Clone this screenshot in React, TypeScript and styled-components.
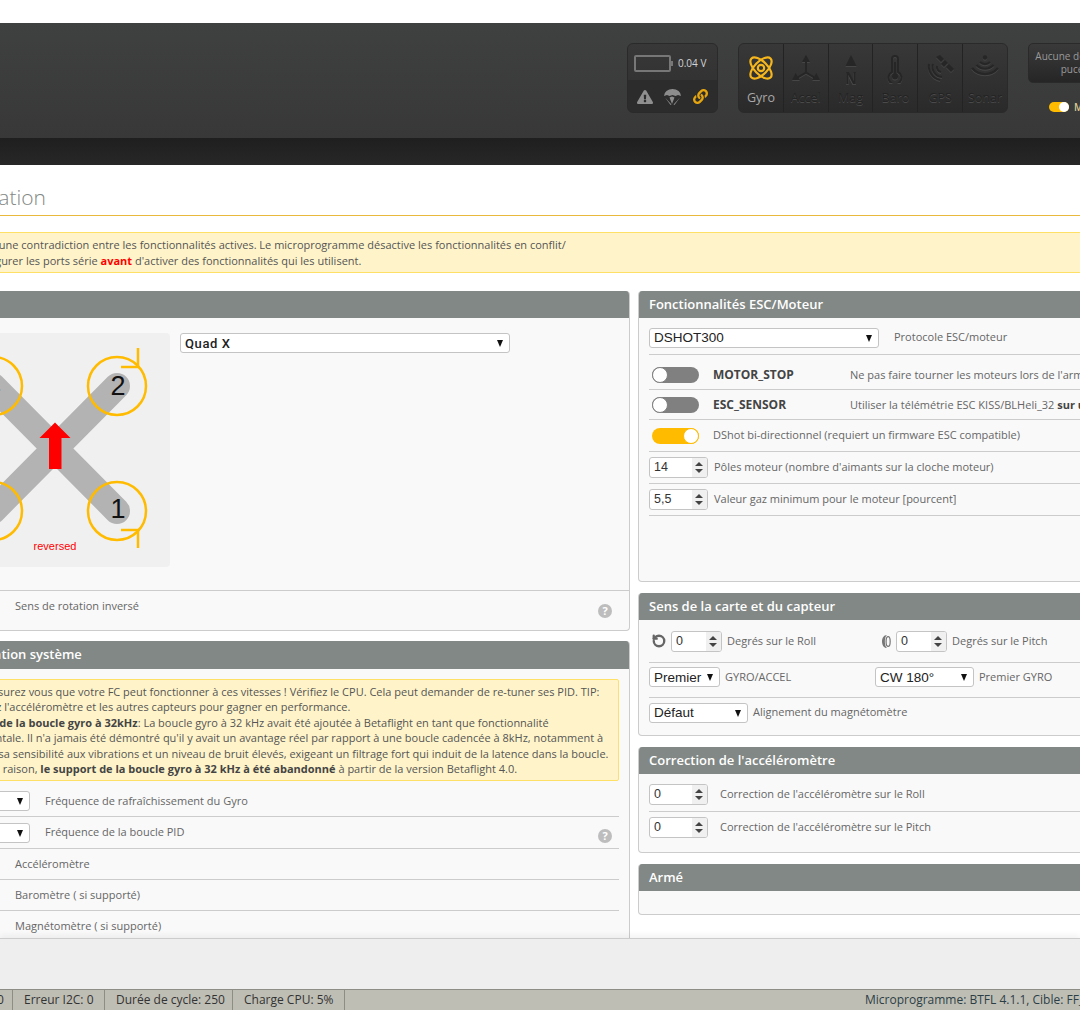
import styled, { createGlobalStyle } from "styled-components";
import { FaExclamationTriangle, FaLink } from "react-icons/fa";
import { RotateCcw } from "lucide-react";

const Global = createGlobalStyle`
  html, body {
    margin: 0;
    background: #fff;
    overflow: hidden;
  }
  body {
    font-family: "Open Sans", "Liberation Sans", sans-serif;
    font-size: 11px;
    color: #555;
  }
`;

const Shell = styled.div`
  width: 1080px;
  height: 1010px;
  overflow: hidden;
  display: flex;
  flex-direction: column;
  background: #fff;
`;

const TopGap = styled.div`
  height: 23px;
  flex: none;
`;

const Header = styled.header`
  height: 115px;
  flex: none;
  box-sizing: border-box;
  padding: 20px 0 0 627px;
  display: flex;
  align-items: flex-start;
  gap: 20px;
  overflow: hidden;
  background: linear-gradient(to bottom, #3f4040 0%, #383838 100%);
`;

const SubHeader = styled.div`
  height: 27px;
  flex: none;
  background: linear-gradient(to bottom, #1f1f1f, #272727);
`;

const Battery = styled.div`
  width: 91px;
  height: 70px;
  flex: none;
  box-sizing: border-box;
  border: 1px solid #2a2a2a;
  border-radius: 6px;
  overflow: hidden;
  background: linear-gradient(to bottom, #383838, #2e2e2e);
`;

const BatteryTop = styled.div`
  height: 36px;
  display: flex;
  align-items: center;
  padding: 2px 0 0 6px;
  box-sizing: border-box;
  gap: 7px;
  font-size: 10px;
  color: #d4d4d4;
`;

const BatteryCell = styled.div`
  width: 37px;
  height: 17px;
  box-sizing: border-box;
  border: 2px solid #777;
  border-radius: 2px;
  position: relative;

  &::after {
    content: "";
    position: absolute;
    right: -4px;
    top: 4px;
    width: 2px;
    height: 5px;
    background: #777;
  }
`;

const BatteryIcons = styled.div`
  height: 33px;
  display: flex;
  align-items: center;
  justify-content: space-around;
  padding: 0 3px 2px;
  background: #2c2c2c;
  color: #8f8f8f;
`;

const Sensors = styled.div`
  flex: none;
  width: 270px;
  display: flex;
  height: 70px;
  box-sizing: border-box;
  border: 1px solid #2a2a2a;
  border-radius: 6px;
  overflow: hidden;
  background: linear-gradient(to bottom, #383838, #2a2a2a);
`;

const Sensor = styled.div<{ $on?: boolean }>`
  flex: 1;
  min-width: 0;
  box-sizing: border-box;
  display: flex;
  flex-direction: column;
  align-items: center;
  justify-content: space-between;
  padding: 11px 0 6px;
  border-left: 1px solid #232323;
  font-size: 12.5px;
  line-height: 16px;
  color: ${({ $on }) => ($on ? "#a8a8a8" : "#232323")};
  text-shadow: ${({ $on }) => ($on ? "none" : "0 1px 0 #4a4a4a")};

  &:first-child {
    border-left: 0;
  }

  svg {
    display: block;
    filter: ${({ $on }) => ($on ? "none" : "drop-shadow(0 1px 0 #464646)")};
  }
`;

const RightTools = styled.div`
  flex: none;
  display: flex;
  flex-direction: column;
  gap: 17px;
`;

const ChipBox = styled.div`
  width: 88px;
  height: 40px;
  box-sizing: border-box;
  border: 1px solid #2a2a2a;
  border-radius: 5px;
  padding: 6px 2px 0;
  text-align: center;
  font-size: 10px;
  line-height: 13px;
  color: #9a9a9a;
  background: linear-gradient(to bottom, #3a3a3a, #262626);
`;

const ExpertRow = styled.div`
  display: flex;
  align-items: center;
  gap: 5px;
  padding-left: 21px;
  font-size: 10px;
  font-weight: 600;
  color: #d8c890;
`;

const MiniToggle = styled.span`
  width: 20px;
  height: 10px;
  border-radius: 5px;
  background: #ffbb00;
  position: relative;

  &::after {
    content: "";
    position: absolute;
    right: 0;
    top: 0;
    width: 10px;
    height: 10px;
    border-radius: 50%;
    background: #fff;
  }
`;

const Main = styled.main`
  flex: 1;
  min-height: 0;
  overflow: hidden;
  background: #fff;
`;

const Content = styled.div`
  width: 1409px;
  margin-left: -71px;
`;

const Title = styled.h1`
  margin: 0;
  height: 51px;
  box-sizing: border-box;
  padding-top: 17px;
  font-size: 21px;
  line-height: 30px;
  font-weight: 300;
  color: #828885;
  border-bottom: 1px solid #e8b93c;
  text-indent: -11px;
`;

const TopNote = styled.div`
  margin-top: 16px;
  height: 41px;
  box-sizing: border-box;
  padding: 4px 0 0 9px;
  background: #fff4c9;
  border-top: 1px solid #ffe066;
  border-bottom: 1px solid #ffe066;
  line-height: 15.6px;
  color: #555;
  white-space: nowrap;
`;

const Red = styled.strong`
  color: #f00;
`;

const Columns = styled.div`
  display: grid;
  grid-template-columns: 701px 700px;
  gap: 8px;
  margin-top: 18px;
`;

const Column = styled.div`
  display: flex;
  flex-direction: column;
  gap: 10px;
`;

const RightColumn = styled(Column)`
  gap: 11px;
`;

const Panel = styled.section`
  box-sizing: border-box;
  border: 1px solid #ccc;
  border-top: 0;
  border-radius: 4px;
  background: #f9f9f9;
  overflow: hidden;
`;

const PanelHead = styled.h2<{ $h?: number }>`
  margin: 0 -1px;
  height: ${({ $h }) => $h ?? 27}px;
  padding-left: 11px;
  font-size: 13px;
  line-height: 26px;
  font-weight: 600;
  color: #fff;
  background: #828885;
`;

const PanelBody = styled.div<{ $h?: number }>`
  ${({ $h }) => ($h ? `height: ${$h}px;` : "")}
`;

const MixerRow = styled.div`
  display: flex;
  align-items: flex-start;
  gap: 10px;
  height: 273px;
  box-sizing: border-box;
  padding: 15px 0 0 10px;
  border-bottom: 1px solid #ccc;
`;

const MixerTile = styled.div`
  width: 230px;
  height: 234px;
  border-radius: 4px;
  background: #f0f0f0;
  flex: none;
`;

const Row = styled.div<{
  $h: number;
  $pt?: number;
  $pb?: number;
  $flat?: boolean;
  $gap?: number;
}>`
  display: flex;
  align-items: center;
  box-sizing: border-box;
  height: ${({ $h }) => $h}px;
  padding-top: ${({ $pt }) => $pt ?? 0}px;
  padding-bottom: ${({ $pb }) => $pb ?? 0}px;
  margin: 0 10px;
  gap: ${({ $gap }) => $gap ?? 5}px;
  border-bottom: ${({ $flat }) => ($flat ? "0" : "1px solid #ccc")};
  white-space: nowrap;
  color: #666;
`;

const WideRow = styled(Row)`
  margin: 0;
  padding-left: 11px;
  padding-right: 17px;
`;

const Half = styled.div<{ $w: number }>`
  flex: none;
  width: ${({ $w }) => $w}px;
  display: flex;
  align-items: center;
  gap: 5px;
`;

const Label = styled.span<{ $ml?: number }>`
  margin-left: ${({ $ml }) => $ml ?? 0}px;
  margin-bottom: 2px;
  color: #666;
`;

const Name = styled.strong`
  width: 137px;
  flex: none;
  font-size: 12px;
  font-weight: 700;
  color: #444;
  margin: 0 0 2px 14px;
`;

const Help = styled.span<{ $mt?: number; $mr?: number }>`
  width: 14px;
  height: 14px;
  flex: none;
  margin-left: auto;
  margin-top: ${({ $mt }) => $mt ?? 0}px;
  margin-right: ${({ $mr }) => $mr ?? 0}px;
  border-radius: 50%;
  background: #bdbdbd;
  color: #fff;
  font-size: 11px;
  font-weight: 700;
  line-height: 14px;
  text-align: center;
`;

const Toggle = styled.span<{ $on?: boolean }>`
  width: 47px;
  height: 16px;
  flex: none;
  border-radius: 8px;
  background: ${({ $on }) => ($on ? "#ffbb00" : "#808080")};
  position: relative;
  margin-left: 3px;

  &::after {
    content: "";
    position: absolute;
    top: 0;
    ${({ $on }) => ($on ? "right: 0;" : "left: 0;")}
    width: 16px;
    height: 16px;
    box-sizing: border-box;
    border-radius: 50%;
    background: #fff;
    border: 1px solid ${({ $on }) => ($on ? "#ffbb00" : "#808080")};
  }
`;

const SelectWrap = styled.span<{ $w: number }>`
  width: ${({ $w }) => $w}px;
  height: 20px;
  flex: none;
  position: relative;
  display: block;

  &::after {
    content: "";
    position: absolute;
    right: 7px;
    top: 7px;
    border-left: 3.5px solid transparent;
    border-right: 3.5px solid transparent;
    border-top: 7px solid #111;
    pointer-events: none;
  }
`;

const NativeSelect = styled.select<{ $quad?: boolean }>`
  appearance: none;
  display: block;
  width: 100%;
  height: 100%;
  box-sizing: border-box;
  margin: 0;
  padding: 0 0 0 4px;
  border: 1px solid #c4c4c4;
  border-radius: 3px;
  background: #fff;
  color: #222;
  font-family: ${({ $quad }) => ($quad ? "Roboto" : '"Liberation Sans"')}, sans-serif;
  font-size: ${({ $quad }) => ($quad ? "13px" : "13.5px")};
  font-weight: ${({ $quad }) => ($quad ? 500 : 400)};
  letter-spacing: ${({ $quad }) => ($quad ? "0.6px" : "0")};
`;

const NumberBox = styled.span<{ $w: number }>`
  width: ${({ $w }) => $w}px;
  height: 21px;
  flex: none;
  box-sizing: border-box;
  display: flex;
  border: 1px solid #c4c4c4;
  border-radius: 3px;
  background: #fff;
  overflow: hidden;
`;

const NumberValue = styled.span`
  flex: 1;
  padding-left: 4px;
  font-family: "Liberation Sans", sans-serif;
  font-size: 12.5px;
  line-height: 19px;
  color: #333;
`;

const Stepper = styled.span`
  width: 15px;
  background: #f0f0f0;
  position: relative;

  &::before,
  &::after {
    content: "";
    position: absolute;
    left: 3px;
    border-left: 4px solid transparent;
    border-right: 4px solid transparent;
  }

  &::before {
    top: 4px;
    border-bottom: 4px solid #444;
  }

  &::after {
    bottom: 4px;
    border-top: 4px solid #444;
  }
`;

const YellowNote = styled.div`
  margin: 10px 10px 0;
  height: 102px;
  box-sizing: border-box;
  padding: 4px 0 0 6px;
  background: #fff4c9;
  border: 1px solid #ffe066;
  border-radius: 2px;
  line-height: 15.4px;
  white-space: nowrap;
  color: #555;
`;

const Dark = styled.strong`
  color: #444;
`;

const RollIcon = styled(RotateCcw)`
  flex: none;
  margin-left: 3px;
`;

const Footer = styled.div`
  height: 51px;
  flex: none;
  background: #eee;
  border-top: 1px solid #ccc;
  box-shadow: 0 -3px 6px rgba(0, 0, 0, 0.05);
  box-sizing: border-box;
`;

const StatusBar = styled.footer`
  height: 21px;
  flex: none;
  display: flex;
  align-items: stretch;
  box-sizing: border-box;
  background: #bfbeb5;
  border-top: 1px solid #8d8c85;
  font-size: 12px;
  line-height: 20px;
  color: #333;
  white-space: nowrap;
`;

const StatusItem = styled.span<{ $w: number }>`
  width: ${({ $w }) => $w}px;
  flex: none;
  box-sizing: border-box;
  padding-left: 11px;
  border-right: 1px solid #8d8c85;
`;

const ClippedStat = styled(StatusItem)`
  padding-left: 0;
  text-indent: -3px;
`;

const FirmwareInfo = styled.span`
  flex: none;
  margin-left: 520px;
  color: #2c3e46;
`;

function Select({ value, w, quad }: { value: string; w: number; quad?: boolean }) {
  return (
    <SelectWrap $w={w}>
      <NativeSelect $quad={quad} defaultValue={value}>
        <option>{value}</option>
      </NativeSelect>
    </SelectWrap>
  );
}

function Num({ value, w = 59 }: { value: string; w?: number }) {
  return (
    <NumberBox $w={w}>
      <NumberValue>{value}</NumberValue>
      <Stepper />
    </NumberBox>
  );
}

function Mixer() {
  const orange = "#ffbb00";
  return (
    <svg width="230" height="234" viewBox="0 0 230 234">
      <g stroke="#b3b3b3" strokeWidth="26" strokeLinecap="round">
        <line x1="53" y1="53" x2="177" y2="178" />
        <line x1="177" y1="53" x2="53" y2="178" />
      </g>
      <g fill="none" stroke={orange} strokeWidth="2.5">
        <circle cx="53" cy="53" r="29" />
        <circle cx="177" cy="53" r="29" />
        <circle cx="53" cy="178" r="29" />
        <circle cx="177" cy="178" r="29" />
        <path d="M198 15 V34 H181" />
        <path d="M198 215 V197 H181" />
        <path d="M32 15 V34 H49" />
        <path d="M32 215 V197 H49" />
      </g>
      <path d="M115 89.500 L130.500 105 H121.500 V136 H109 V105 H99.500 Z" fill="#f00" />
      <g fontFamily="Liberation Sans, sans-serif" fontSize="27" fill="#111" textAnchor="middle">
        <text x="178" y="62">2</text>
        <text x="178" y="185">1</text>
        <text x="53" y="62">4</text>
        <text x="53" y="185">3</text>
      </g>
      <text
        x="115"
        y="217"
        fontFamily="Liberation Sans, sans-serif"
        fontSize="11"
        fill="#f00"
        textAnchor="middle"
      >
        reversed
      </text>
    </svg>
  );
}

function GyroIcon() {
  return (
    <svg width="26" height="26" viewBox="0 0 26 26" fill="none" stroke="#f5b51c" strokeWidth="2.2">
      <ellipse cx="13" cy="13" rx="13.500" ry="6.500" transform="rotate(45 13 13)" />
      <ellipse cx="13" cy="13" rx="13.500" ry="6.500" transform="rotate(-45 13 13)" />
      <circle cx="13" cy="13" r="3.200" />
    </svg>
  );
}

function AccelIcon() {
  return (
    <svg width="28" height="26" viewBox="0 0 28 26" fill="#262626" stroke="none">
      <path d="M13 7h2v10l8.500 5-1 1.700L14 18.700l-8.500 5-1-1.700L13 17z" />
      <path d="M14 0l4 7h-8zM0 25l3.600-7 4.200 7zM28 25l-3.600-7-4.200 7z" />
    </svg>
  );
}

function MagIcon() {
  return (
    <svg width="18" height="29" viewBox="0 0 18 29">
      <path d="M9 0l5.500 11h-11z" fill="#262626" />
      <text
        x="9"
        y="29"
        fontFamily="Liberation Sans, sans-serif"
        fontWeight="700"
        fontSize="16"
        fill="#262626"
        textAnchor="middle"
      >
        N
      </text>
    </svg>
  );
}

function BaroIcon() {
  return (
    <svg width="16" height="28" viewBox="0 0 16 28" fill="none" stroke="#262626" strokeWidth="2">
      <path d="M5 17V4a3 3 0 0 1 6 0v13a6.500 6.500 0 1 1-6 0z" />
      <circle cx="8" cy="21.500" r="3" fill="#262626" stroke="none" />
      <path d="M8 7v12" />
    </svg>
  );
}

function GpsIcon() {
  return (
    <svg width="28" height="26" viewBox="0 0 28 26" fill="#262626">
      <path d="M10 2l4-2 4 4-3 3zM19 5l3 3-4 4-3-3zM20 12l3-3 5 5-3 3z" />
      <g fill="none" stroke="#262626" strokeWidth="2">
        <path d="M7 9a10 10 0 0 0 9 13" />
        <path d="M3 9a14 14 0 0 0 11 16" />
        <path d="M11 11a5 5 0 0 0 4 6" />
      </g>
    </svg>
  );
}

function SonarIcon() {
  return (
    <svg width="28" height="22" viewBox="0 0 28 22" fill="none" stroke="#262626" strokeWidth="2.200">
      <circle cx="14" cy="2.500" r="2.200" fill="#262626" stroke="none" />
      <path d="M9 7a7 7 0 0 0 10 0" />
      <path d="M5.500 10a11.500 11.500 0 0 0 17 0" />
      <path d="M1 13a17 17 0 0 0 26 0" />
    </svg>
  );
}

function ParachuteIcon() {
  return (
    <svg width="17" height="16" viewBox="0 0 17 16" fill="#8c8c8c">
      <path d="M0 7a8.500 7 0 0 1 17 0l-3-1-2.500 1-3-1-3 1-2.500-1z" />
      <path d="M1 8.500l6.500 7-1 .5zM16 8.500l-6.500 7 1 .5zM5.500 8.500L8 15l2.500-6.500-2.500-1z" />
    </svg>
  );
}

function PitchIcon() {
  return (
    <svg width="9" height="15" viewBox="0 0 11 16" fill="#777">
      <path d="M6 0C2.500 0 0 3.500 0 8s2.500 8 6 8c-2-2-2.500-5-2.500-8S4 2 6 0z" />
      <ellipse cx="7.500" cy="8" rx="2.500" ry="6" fill="none" stroke="#777" strokeWidth="1.500" />
    </svg>
  );
}

const sensors = [
  { label: "Gyro", icon: <GyroIcon />, on: true },
  { label: "Accel", icon: <AccelIcon /> },
  { label: "Mag", icon: <MagIcon /> },
  { label: "Baro", icon: <BaroIcon /> },
  { label: "GPS", icon: <GpsIcon /> },
  { label: "Sonar", icon: <SonarIcon /> },
];

export default function App() {
  return (
    <Shell>
      <Global />
      <TopGap />
      <Header>
        <Battery>
          <BatteryTop>
            <BatteryCell />
            <span>0.04 V</span>
          </BatteryTop>
          <BatteryIcons>
            <FaExclamationTriangle size={16} />
            <ParachuteIcon />
            <FaLink size={15} color="#e5a50f" />
          </BatteryIcons>
        </Battery>
        <Sensors>
          {sensors.map((s) => (
            <Sensor key={s.label} $on={s.on}>
              {s.icon}
              <span>{s.label}</span>
            </Sensor>
          ))}
        </Sensors>
        <RightTools>
          <ChipBox>
            Aucune donnée
            <br />
            puce
          </ChipBox>
          <ExpertRow>
            <MiniToggle />
            Mode Expert
          </ExpertRow>
        </RightTools>
      </Header>
      <SubHeader />
      <Main>
        <Content>
          <Title>Configuration</Title>
          <TopNote>
            Il s'agit ici d'une contradiction entre les fonctionnalités actives. Le microprogramme
            désactive les fonctionnalités en conflit/
            <br />
            Il faut configurer les ports série <Red>avant</Red> d'activer des fonctionnalités qui
            les utilisent.
          </TopNote>
          <Columns>
            <Column>
              <Panel>
                <PanelHead>Mixeur</PanelHead>
                <PanelBody>
                  <MixerRow>
                    <MixerTile>
                      <Mixer />
                    </MixerTile>
                    <Select value="Quad X" w={330} quad />
                  </MixerRow>
                  <WideRow $h={39} $pb={8} $flat>
                    <Toggle />
                    <Label $ml={19}>Sens de rotation inversé</Label>
                    <Help $mt={8}>?</Help>
                  </WideRow>
                </PanelBody>
              </Panel>
              <Panel>
                <PanelHead $h={28}>Configuration système</PanelHead>
                <PanelBody>
                  <YellowNote>
                    Notez : Assurez vous que votre FC peut fonctionner à ces vitesses ! Vérifiez le
                    CPU. Cela peut demander de re-tuner ses PID. TIP:
                    <br />
                    Désactivez l'accéléromètre et les autres capteurs pour gagner en performance.
                    <br />
                    <Dark>Abandon de la boucle gyro à 32kHz</Dark>: La boucle gyro à 32 kHz avait été
                    ajoutée à Betaflight en tant que fonctionnalité
                    <br />
                    expérimentale. Il n'a jamais été démontré qu'il y avait un avantage réel par
                    rapport à une boucle cadencée à 8kHz, notamment à
                    <br />
                    du fait de sa sensibilité aux vibrations et un niveau de bruit élevés, exigeant
                    un filtrage fort qui induit de la latence dans la boucle.
                    <br />
                    Pour cette raison, <Dark>le support de la boucle gyro à 32 kHz à été abandonné</Dark>{" "}
                    à partir de la version Betaflight 4.0.
                  </YellowNote>
                  <Row $h={36} $pt={5} $gap={15}>
                    <Select value="8 kHz" w={90} />
                    <Label>Fréquence de rafraîchissement du Gyro</Label>
                  </Row>
                  <Row $h={32} $gap={15}>
                    <Select value="4 kHz" w={90} />
                    <Label>Fréquence de la boucle PID</Label>
                    <Help $mt={7} $mr={7}>?</Help>
                  </Row>
                  <Row $h={31} $gap={25}>
                    <Toggle />
                    <Label>Accéléromètre</Label>
                  </Row>
                  <Row $h={31} $gap={25}>
                    <Toggle />
                    <Label>Baromètre ( si supporté)</Label>
                  </Row>
                  <Row $h={31} $gap={25}>
                    <Toggle />
                    <Label>Magnétomètre ( si supporté)</Label>
                  </Row>
                </PanelBody>
              </Panel>
            </Column>
            <RightColumn>
              <Panel>
                <PanelHead>Fonctionnalités ESC/Moteur</PanelHead>
                <PanelBody $h={263}>
                  <Row $h={37} $pt={3}>
                    <Select value="DSHOT300" w={230} />
                    <Label $ml={10}>Protocole ESC/moteur</Label>
                  </Row>
                  <Row $h={35} $pt={6} $gap={0}>
                    <Toggle />
                    <Name>MOTOR_STOP</Name>
                    <Label>Ne pas faire tourner les moteurs lors de l'armement</Label>
                  </Row>
                  <Row $h={30} $pt={1} $gap={0}>
                    <Toggle />
                    <Name>ESC_SENSOR</Name>
                    <Label>
                      Utiliser la télémétrie ESC KISS/BLHeli_32 <Dark>sur un fil dédié</Dark>
                    </Label>
                  </Row>
                  <Row $h={32} $gap={14}>
                    <Toggle $on />
                    <Label>DShot bi-directionnel (requiert un firmware ESC compatible)</Label>
                  </Row>
                  <Row $h={32} $gap={6}>
                    <Num value="14" />
                    <Label>Pôles moteur (nombre d'aimants sur la cloche moteur)</Label>
                  </Row>
                  <Row $h={32} $gap={6}>
                    <Num value="5,5" />
                    <Label>Valeur gaz minimum pour le moteur [pourcent]</Label>
                  </Row>
                </PanelBody>
              </Panel>
              <Panel>
                <PanelHead>Sens de la carte et du capteur</PanelHead>
                <PanelBody>
                  <Row $h={43} $gap={0}>
                    <Half $w={233}>
                      <RollIcon size={14} strokeWidth={4} color="#666" />
                      <Num value="0" w={51} />
                      <Label>Degrés sur le Roll</Label>
                    </Half>
                    <Half $w={260}>
                      <PitchIcon />
                      <Num value="0" w={51} />
                      <Label>Degrés sur le Pitch</Label>
                    </Half>
                  </Row>
                  <Row $h={35} $pb={6} $gap={0}>
                    <Half $w={226}>
                      <Select value="Premier" w={71} />
                      <Label>GYRO/ACCEL</Label>
                    </Half>
                    <Half $w={260}>
                      <Select value="CW 180°" w={99} />
                      <Label>Premier GYRO</Label>
                    </Half>
                  </Row>
                  <Row $h={37} $pb={8} $flat>
                    <Select value="Défaut" w={99} />
                    <Label>Alignement du magnétomètre</Label>
                  </Row>
                </PanelBody>
              </Panel>
              <Panel>
                <PanelHead>Correction de l'accéléromètre</PanelHead>
                <PanelBody>
                  <Row $h={38} $pt={4} $gap={12}>
                    <Num value="0" />
                    <Label>Correction de l'accéléromètre sur le Roll</Label>
                  </Row>
                  <Row $h={40} $pb={9} $gap={12} $flat>
                    <Num value="0" />
                    <Label>Correction de l'accéléromètre sur le Pitch</Label>
                  </Row>
                </PanelBody>
              </Panel>
              <Panel>
                <PanelHead>Armé</PanelHead>
                <PanelBody $h={23} />
              </Panel>
            </RightColumn>
          </Columns>
        </Content>
      </Main>
      <Footer />
      <StatusBar>
        <ClippedStat $w={13}>0</ClippedStat>
        <StatusItem $w={92}>Erreur I2C: 0</StatusItem>
        <StatusItem $w={128}>Durée de cycle: 250</StatusItem>
        <StatusItem $w={112}>Charge CPU: 5%</StatusItem>
        <FirmwareInfo>Microprogramme: BTFL 4.1.1, Cible: FF_FORTINIF4</FirmwareInfo>
      </StatusBar>
    </Shell>
  );
}
